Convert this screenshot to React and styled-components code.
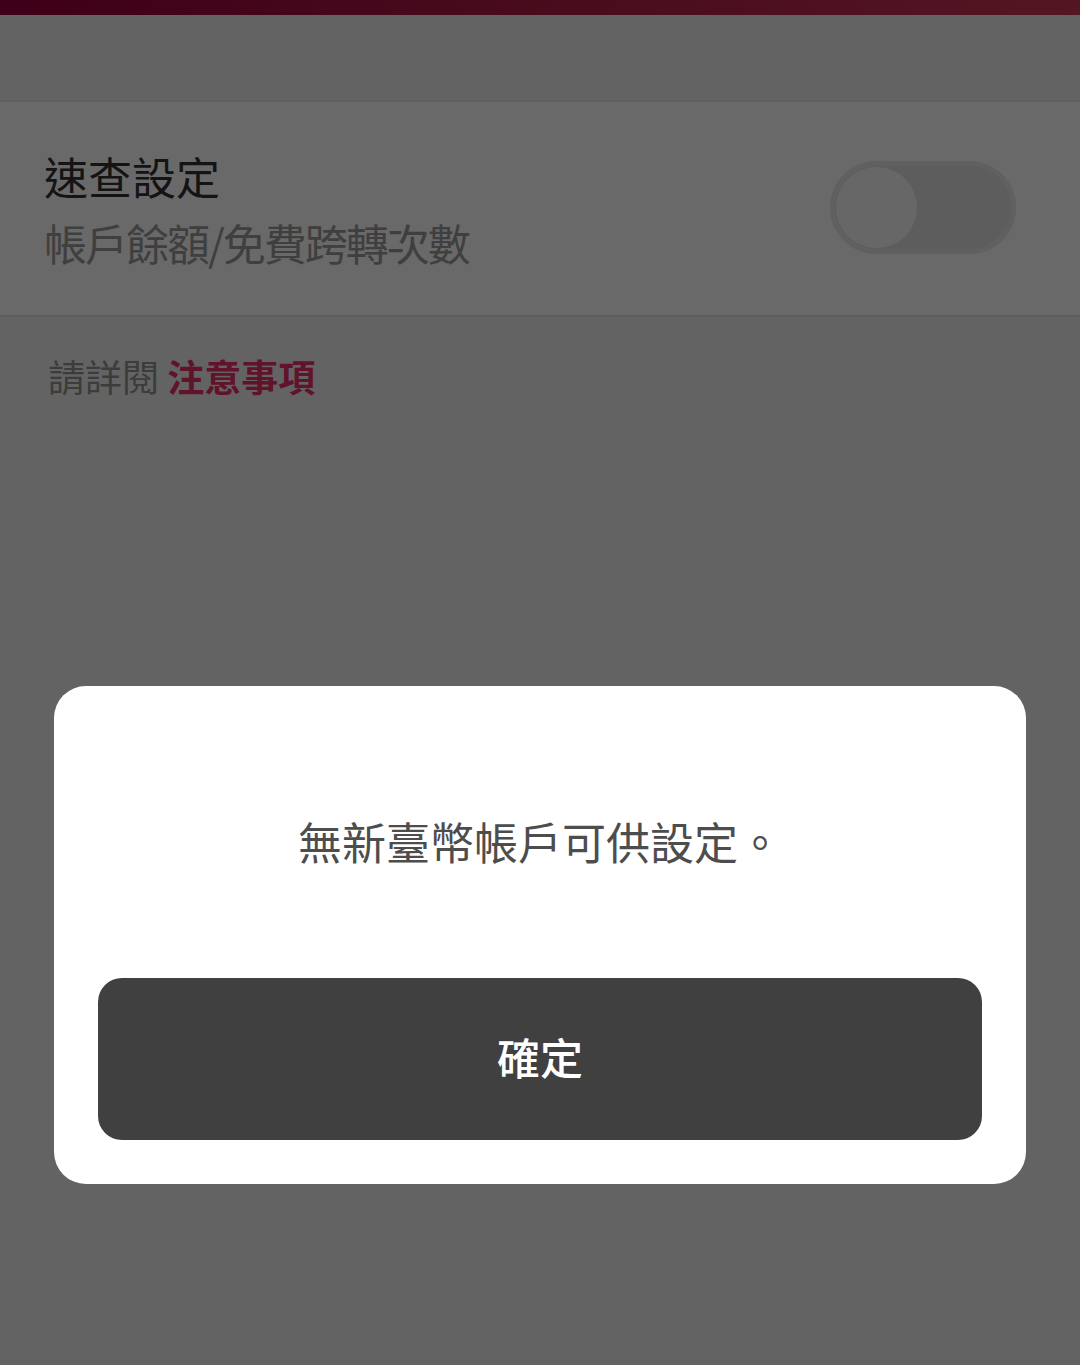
import React from "react";
import styled, { createGlobalStyle } from "styled-components";

const Global = createGlobalStyle`
  html, body { margin: 0; padding: 0; }
  body {
    background: #f0f0f0;
    font-family: "Noto Sans CJK TC", "Noto Sans", sans-serif;
    -webkit-font-smoothing: antialiased;
  }
`;

const Page = styled.div`
  min-height: 1365px;
  background: #f0f0f0;
  display: flex;
  flex-direction: column;
`;

const StatusBar = styled.div`
  height: 15px;
  background: linear-gradient(90deg, #97003b 0%, #b21f48 55%, #cd3655 100%);
`;

const AppBar = styled.div`
  height: 87px;
  background: #f0f0f0;
`;

const Card = styled.section`
  background: #ffffff;
  box-shadow: 0 -2px 2px rgba(0, 0, 0, 0.04);
  border-bottom: 2px solid #e4e4e4;
  display: flex;
  align-items: center;
  justify-content: space-between;
  padding: 41px 64px 39px 44px;
`;

const TextCol = styled.div`
  display: flex;
  flex-direction: column;
`;

const Title = styled.div`
  font-size: 44px;
  line-height: 66px;
  color: #323232;
`;

const Subtitle = styled.div`
  font-size: 43px;
  line-height: 67px;
  letter-spacing: -2px;
  color: #9a9a9a;
`;

const Track = styled.div`
  width: 186px;
  height: 93px;
  box-sizing: border-box;
  border-radius: 47px;
  background: #e1e1e1;
  border: 5px solid #e9e9e9;
  display: flex;
  align-items: center;
  padding-left: 1px;
  margin-top: -4px;
`;

const Knob = styled.div`
  width: 81px;
  height: 81px;
  border-radius: 50%;
  background: #fbfbfb;
`;

const Notice = styled.p`
  margin: 0;
  padding: 31px 48px;
  font-size: 37px;
  line-height: 56px;
  color: #939393;
`;

const NoticeLink = styled.span`
  color: #ea2f69;
  font-weight: 700;
`;

const Backdrop = styled.div`
  position: fixed;
  inset: 0;
  background: rgba(0, 0, 0, 0.59);
  display: flex;
  justify-content: center;
  align-items: flex-start;
  padding-top: 686px;
  box-sizing: border-box;
`;

const Dialog = styled.div`
  width: 972px;
  box-sizing: border-box;
  background: #ffffff;
  border-radius: 32px;
  padding: 0 44px 44px;
  display: flex;
  flex-direction: column;
`;

const Message = styled.p`
  margin: 122px 0 104px;
  text-align: center;
  font-size: 44px;
  line-height: 66px;
  color: #4d4d4d;
`;

const ConfirmButton = styled.button`
  height: 162px;
  border: none;
  border-radius: 24px;
  background: #404040;
  color: #ffffff;
  font-family: inherit;
  font-size: 43px;
  font-weight: 500;
  padding: 0 0 6px;
  cursor: pointer;
`;

export default function App() {
  return (
    <>
      <Global />
      <Page>
        <StatusBar />
        <AppBar />
        <Card>
          <TextCol>
            <Title>速查設定</Title>
            <Subtitle>帳戶餘額/免費跨轉次數</Subtitle>
          </TextCol>
          <Track>
            <Knob />
          </Track>
        </Card>
        <Notice>
          請詳閱 <NoticeLink>注意事項</NoticeLink>
        </Notice>
      </Page>
      <Backdrop>
        <Dialog>
          <Message>無新臺幣帳戶可供設定。</Message>
          <ConfirmButton>確定</ConfirmButton>
        </Dialog>
      </Backdrop>
    </>
  );
}
